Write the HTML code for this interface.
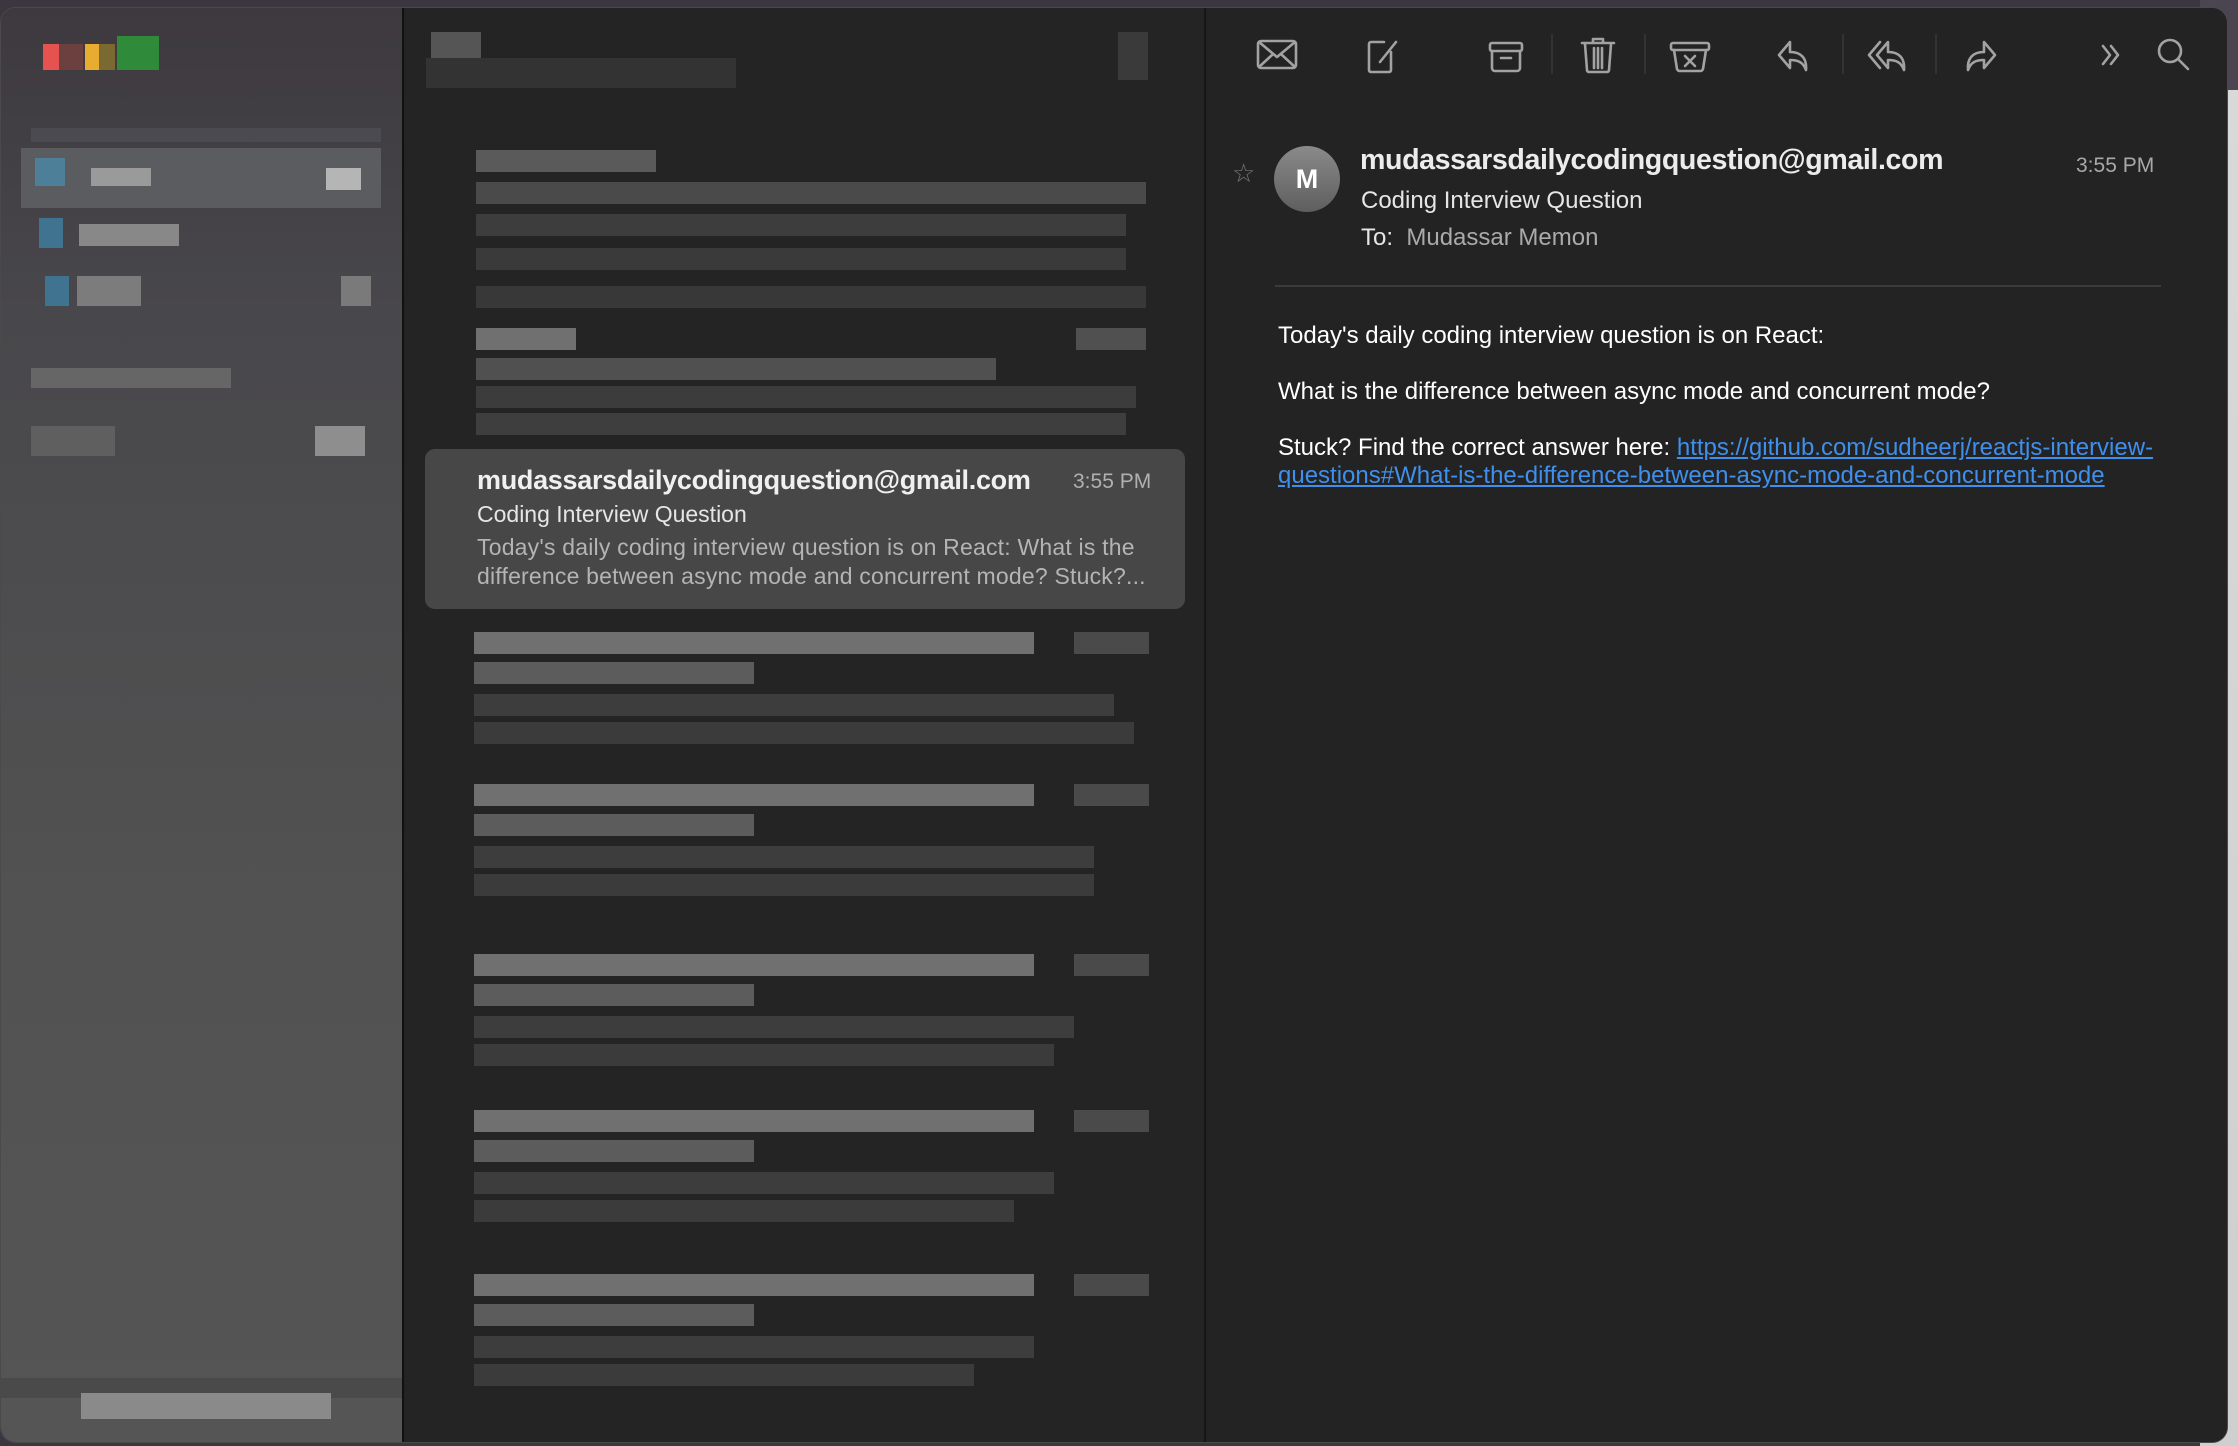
<!DOCTYPE html>
<html><head><meta charset="utf-8"><style>
*{margin:0;padding:0;box-sizing:border-box}
html,body{width:2238px;height:1446px;overflow:hidden;background:#3b3640;font-family:"Liberation Sans",Helvetica,sans-serif}
.abs{position:absolute}
#rightbg{left:2200px;top:0;width:38px;height:1446px;background:linear-gradient(#4a4550 0,#4a4550 90px,#d9d9d9 90px,#cfcfcf)}
#win{left:0;top:7px;width:2228px;height:1436px;border-radius:16px;overflow:hidden;background:#232323;border:1px solid #4a4a4a}
#side{left:0;top:0;width:403px;height:100%;background:linear-gradient(#3d393f 0,#48474b 300px,#525252 900px,#555 100%);border-right:2px solid #111}
#list{left:405px;top:0;width:800px;height:100%;background:#242424;border-right:2px solid #151515}
#detail{left:1207px;top:0;width:1021px;height:100%;background:#232323}
.b{position:absolute;height:22px}
.sel{left:19px;top:441px;width:760px;height:160px;background:#474747;border-radius:10px}
.t{position:absolute;white-space:nowrap}
svg.i{position:absolute;top:22px;width:48px;height:48px;fill:none;stroke:#a2a2a2;stroke-width:2.6;stroke-linecap:round;stroke-linejoin:round}
.sep{position:absolute;top:26px;width:2px;height:40px;background:#333}
a{color:#3f8fec;text-decoration:underline}
</style></head><body>
<div id="rightbg" class="abs"></div>
<div id="win" class="abs">
 <div id="side" class="abs">
  <div class="abs" style="left:42px;top:36px;width:16px;height:26px;background:#e5524f"></div>
  <div class="abs" style="left:58px;top:36px;width:24px;height:26px;background:#6d4040"></div>
  <div class="abs" style="left:84px;top:36px;width:14px;height:26px;background:#e8ac30"></div>
  <div class="abs" style="left:98px;top:36px;width:16px;height:26px;background:#7a6a32"></div>
  <div class="abs" style="left:116px;top:28px;width:42px;height:34px;background:#2f8a3a"></div>
  <div class="abs" style="left:30px;top:120px;width:350px;height:14px;background:#4a4a50"></div>
  <div class="abs" style="left:20px;top:140px;width:360px;height:60px;background:#5a5c60"></div>
  <div class="abs" style="left:34px;top:150px;width:30px;height:28px;background:#4d7f98"></div>
  <div class="abs" style="left:90px;top:160px;width:60px;height:18px;background:#9a9a9a"></div>
  <div class="abs" style="left:325px;top:160px;width:35px;height:22px;background:#b5b5b5"></div>
  <div class="abs" style="left:38px;top:210px;width:24px;height:30px;background:#3f7390"></div>
  <div class="abs" style="left:78px;top:216px;width:100px;height:22px;background:#888"></div>
  <div class="abs" style="left:44px;top:268px;width:24px;height:30px;background:#3f7390"></div>
  <div class="abs" style="left:76px;top:268px;width:64px;height:30px;background:#7c7c7c"></div>
  <div class="abs" style="left:340px;top:268px;width:30px;height:30px;background:#7a7a7a"></div>
  <div class="abs" style="left:30px;top:360px;width:200px;height:20px;background:#666"></div>
  <div class="abs" style="left:30px;top:418px;width:84px;height:30px;background:#5f5f5f"></div>
  <div class="abs" style="left:314px;top:418px;width:50px;height:30px;background:#8e8e8e"></div>
  <div class="abs" style="left:0;top:1370px;width:401px;height:20px;background:#4a4a4a"></div>
  <div class="abs" style="left:80px;top:1385px;width:250px;height:26px;background:#8a8a8a"></div>
 </div>
 <div id="list" class="abs">
  <div class="abs" style="left:25px;top:24px;width:50px;height:30px;background:#555"></div>
  <div class="abs" style="left:20px;top:50px;width:310px;height:30px;background:#333"></div>
  <div class="abs" style="left:712px;top:24px;width:30px;height:48px;background:#3a3a3a"></div>
  <div class="abs" style="left:70px;top:134px;width:670px;height:96px">
   <div class="b" style="left:0;top:8px;width:180px;background:#5a5a5a"></div>
   <div class="b" style="left:0;top:40px;width:670px;background:#4a4a4a"></div>
   <div class="b" style="left:0;top:72px;width:650px;background:#3d3d3d"></div>
  </div>
  <div class="abs" style="left:70px;top:230px;width:670px;height:200px">
   <div class="b" style="left:0;top:10px;width:650px;background:#3a3a3a"></div>
   <div class="b" style="left:0;top:48px;width:670px;background:#383838"></div>
   <div class="b" style="left:0;top:90px;width:100px;background:#707070"></div>
   <div class="b" style="left:600px;top:90px;width:70px;background:#505050"></div>
   <div class="b" style="left:0;top:120px;width:520px;background:#505050"></div>
   <div class="b" style="left:0;top:148px;width:660px;background:#3c3c3c"></div>
   <div class="b" style="left:0;top:175px;width:650px;background:#3e3e3e"></div>
  </div>
  <div class="abs sel">
   <div class="t" style="left:52px;top:16px;font-size:27px;font-weight:bold;color:#f0f0f0;letter-spacing:-0.3px">mudassarsdailycodingquestion@gmail.com</div>
   <div class="t" style="left:648px;top:21px;font-size:21px;color:#b0b0b0">3:55 PM</div>
   <div class="t" style="left:52px;top:52px;font-size:23px;color:#e6e6e6">Coding Interview Question</div>
   <div class="t" style="left:52px;top:84px;font-size:23px;color:#b4b4b4;line-height:29px;letter-spacing:0.2px">Today's daily coding interview question is on React: What is the<br>difference between async mode and concurrent mode? Stuck?...</div>
  </div>
  <div id="items"></div>
 </div>
 <div id="detail" class="abs">
  <svg class="i" style="left:45px" viewBox="0 0 48 48"><rect x="5" y="11" width="38" height="27" rx="3"/><path d="M6 12l18 15 18-15M6 37l13-12M42 37l-13-12"/></svg>
  <svg class="i" style="left:152px" viewBox="0 0 48 48"><path d="M24 12H11a2 2 0 0 0-2 2v26a2 2 0 0 0 2 2h18a2 2 0 0 0 2-2V22"/><path d="M20 32l16-20"/></svg>
  <svg class="i" style="left:274px" viewBox="0 0 48 48"><rect x="8" y="13" width="32" height="8" rx="2"/><path d="M10 21v17a3 3 0 0 0 3 3h22a3 3 0 0 0 3-3V21M19 28h10"/></svg>
  <div class="sep" style="left:343px"></div>
  <svg class="i" style="left:366px" viewBox="0 0 48 48"><path d="M8 13h32M19 13V9h10v4M11 14l2 26a2 2 0 0 0 2 2h18a2 2 0 0 0 2-2l2-26M20 18v20M24 18v20M28 18v20"/></svg>
  <div class="sep" style="left:436px"></div>
  <svg class="i" style="left:458px" viewBox="0 0 48 48"><rect x="5" y="13" width="38" height="7" rx="2"/><path d="M8 20l3 19a3 3 0 0 0 3 2h20a3 3 0 0 0 3-2l3-19M19 26l10 10M29 26l-10 10"/></svg>
  <svg class="i" style="left:562px" viewBox="0 0 48 48"><path d="M20 12L9 25l11 13V30c8 0 13 2 16 10 1-12-5-18-16-18z"/></svg>
  <div class="sep" style="left:634px"></div>
  <svg class="i" style="left:656px" viewBox="0 0 48 48"><path d="M16 12L5 25l11 13M24 12L13 25l11 13V30c8 0 13 2 16 10 1-12-5-18-16-18z"/></svg>
  <div class="sep" style="left:727px"></div>
  <svg class="i" style="left:748px" viewBox="0 0 48 48"><path d="M28 12l11 13-11 13V30c-8 0-13 2-16 10-1-12 5-18 16-18z"/></svg>
  <svg class="i" style="left:878px" viewBox="0 0 48 48"><path d="M17 16l7 9-7 9M25 16l7 9-7 9"/></svg>
  <svg class="i" style="left:941px" viewBox="0 0 48 48"><circle cx="21" cy="21" r="11"/><path d="M29 29l10 10"/></svg>

  <div class="t" style="left:24px;top:150px;font-size:26px;color:#777">☆</div>
  <div class="abs" style="left:66px;top:138px;width:66px;height:66px;border-radius:50%;background:linear-gradient(#8a8a8a,#5e5e5e);color:#fff;font-size:27px;font-weight:bold;text-align:center;line-height:66px">M</div>
  <div class="t" style="left:152px;top:136px;font-size:28.6px;font-weight:bold;color:#ececec;letter-spacing:-0.4px">mudassarsdailycodingquestion@gmail.com</div>
  <div class="t" style="left:868px;top:146px;font-size:21px;color:#a8a8a8">3:55 PM</div>
  <div class="t" style="left:153px;top:179px;font-size:24px;color:#e6e6e6">Coding Interview Question</div>
  <div class="t" style="left:153px;top:216px;font-size:24px;color:#e6e6e6">To:&nbsp; <span style="color:#aaa">Mudassar Memon</span></div>
  <div class="abs" style="left:67px;top:277px;width:886px;height:2px;background:#3a3a3a"></div>
  <div class="t" style="left:70px;top:314px;font-size:24px;color:#fff;line-height:28px">Today's daily coding interview question is on React:<br><br>What is the difference between async mode and concurrent mode?<br><br>Stuck? Find the correct answer here: <a>https://github.com/sudheerj/reactjs-interview-</a><br><a>questions#What-is-the-difference-between-async-mode-and-concurrent-mode</a></div>
 </div>
</div>
<script>
var tops=[614,766,936,1092,1256];
var h='';
tops.forEach(function(t,k){
 h+='<div class="abs" style="left:68px;top:'+t+'px;width:680px;height:140px">'+
 '<div class="b" style="left:0;top:10px;width:560px;background:#707070"></div>'+
 '<div class="b" style="left:600px;top:10px;width:75px;background:#4a4a4a"></div>'+
 '<div class="b" style="left:0;top:40px;width:280px;background:#5c5c5c"></div>'+
 '<div class="b" style="left:0;top:72px;width:'+(640-k*20)+'px;background:#3d3d3d"></div>'+
 '<div class="b" style="left:0;top:100px;width:'+(660-k*40)+'px;background:#3b3b3b"></div></div>';
});
document.getElementById('items').innerHTML=h;
</script>
</body></html>
